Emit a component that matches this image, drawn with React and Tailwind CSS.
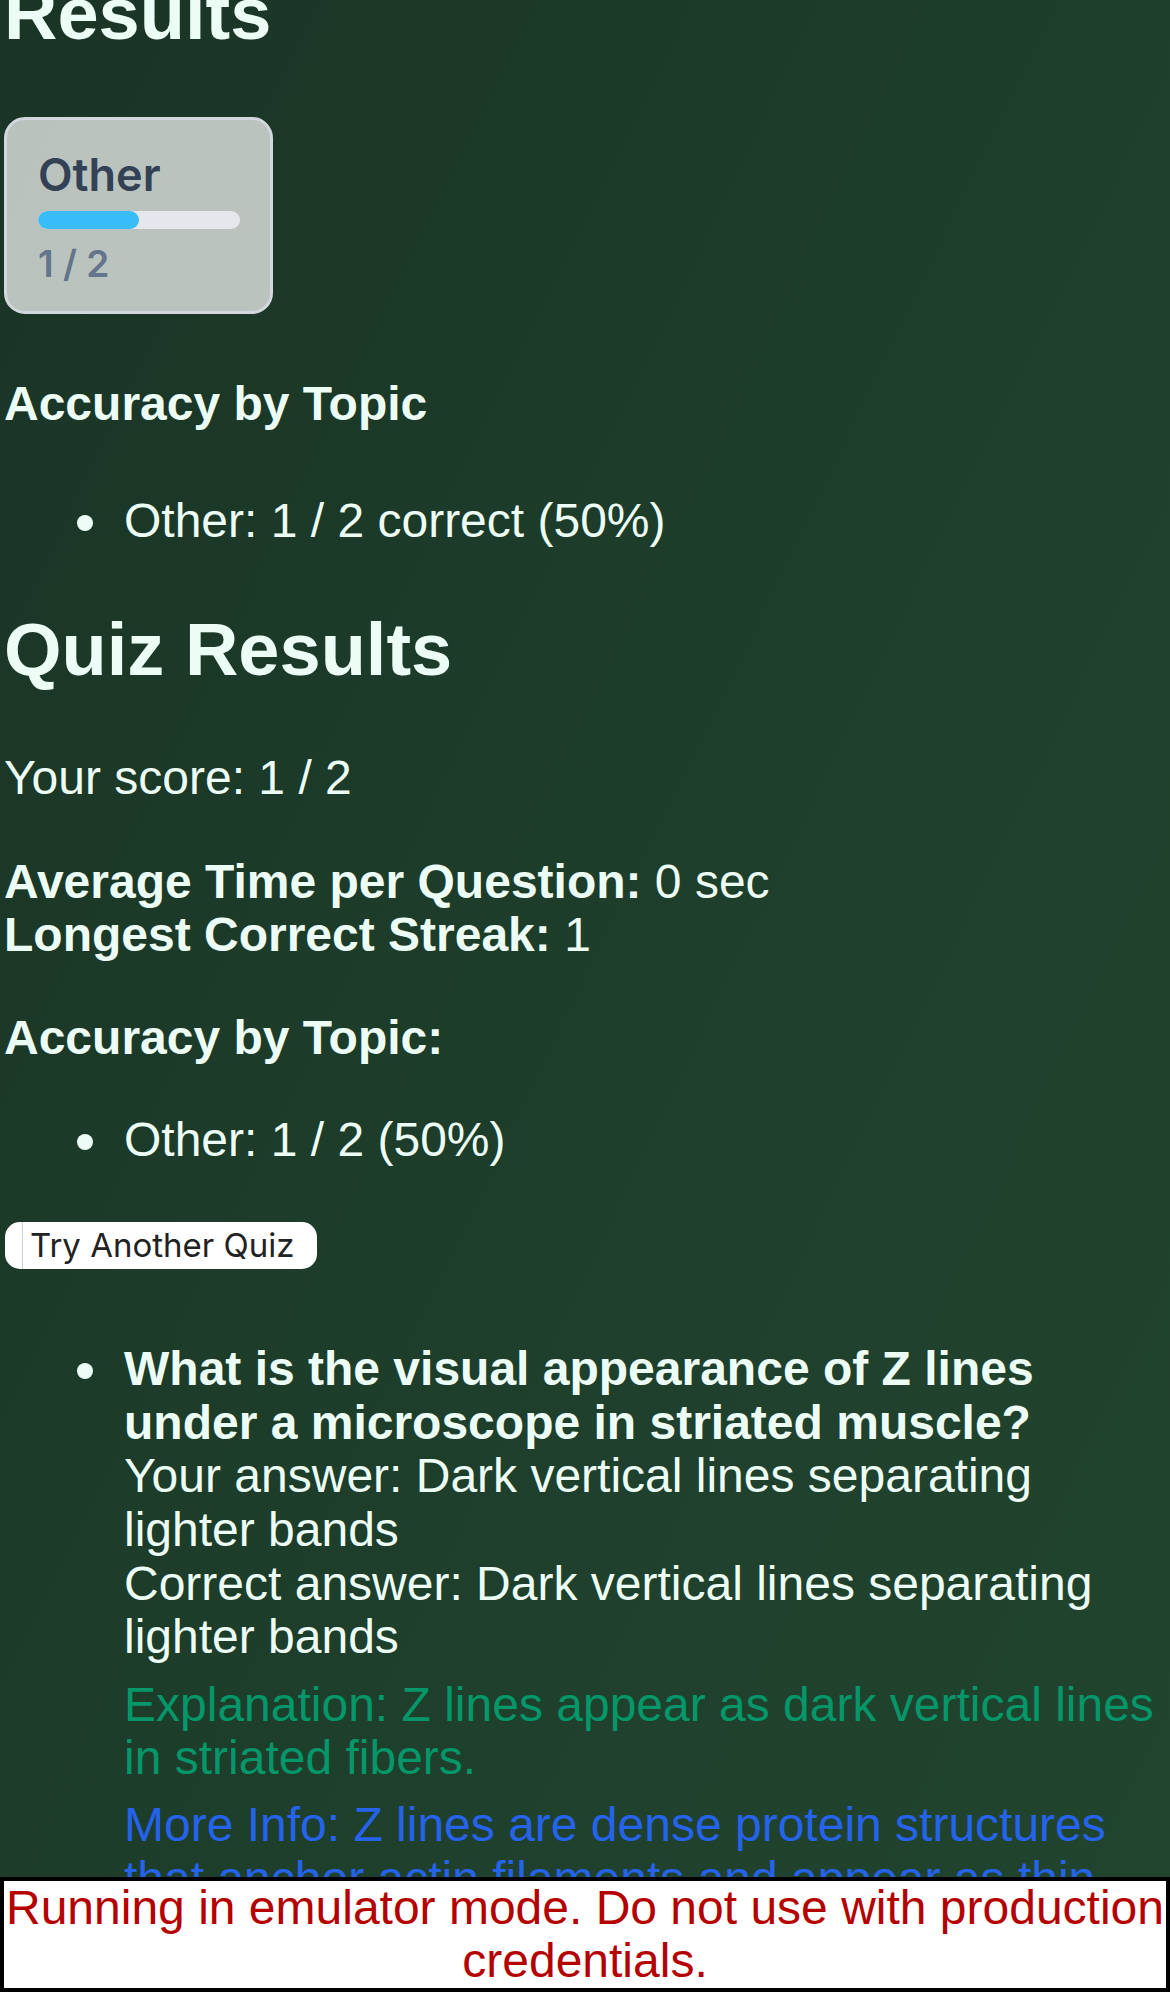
import React from "react";

function Bullet() {
  return <span className="absolute left-[-47px] top-[21px] h-[16px] w-[16px] rounded-full bg-[#ecfdf5]" />;
}

export default function App() {
  return (
    <div className="min-h-[1992px] bg-gradient-to-br from-[#1a3425] via-[#1e3f2c] to-[#22462f] text-[#ecfdf5] font-['Liberation_Sans',Arial,sans-serif] text-[48px] leading-[53.6px] px-[4px] pb-[400px] overflow-hidden">
      <h2 className="mt-[-28px] text-[74px] leading-[83px] font-bold">Results</h2>

      <div className="mt-[62px] w-[269px] h-[197px] rounded-[21px] border-[3px] border-[#d3d6dd] bg-white/70 pt-[28px] pl-[31px] pr-[30px] font-['Inter',sans-serif]">
        <div className="text-[45px] leading-[54px] font-semibold text-[#334155]">Other</div>
        <div className="mt-[9px] h-[18px] w-full rounded-full bg-[#e5e7eb] overflow-hidden">
          <div className="h-full rounded-full bg-[#38bdf8]" style={{ width: "50%" }} />
        </div>
        <div className="mt-[12px] text-[37px] leading-[46px] font-semibold text-[#64748b]">1 / 2</div>
      </div>

      <h4 className="mt-[63px] font-bold">Accuracy by Topic</h4>
      <ul className="mt-[63px] list-none pl-[120px]">
        <li className="relative"><Bullet />Other: 1 / 2 correct (50%)</li>
      </ul>

      <h2 className="mt-[61px] text-[74px] leading-[83px] font-bold">Quiz Results</h2>
      <p className="mt-[60px]">Your score: 1 / 2</p>
      <p className="mt-[50px]">
        <strong className="font-bold">Average Time per Question:</strong> 0 sec
        <br />
        <strong className="font-bold">Longest Correct Streak:</strong> 1
      </p>
      <p className="mt-[49px] font-bold">Accuracy by Topic:</p>
      <ul className="mt-[48px] list-none pl-[120px]">
        <li className="relative"><Bullet />Other: 1 / 2 (50%)</li>
      </ul>

      <button className="mt-[56px] ml-[1px] flex h-[47px] w-[312px] items-stretch rounded-[15px] bg-white text-[#222222] font-['Inter',sans-serif] text-[33px] leading-[47px] overflow-hidden">
        <span className="w-[17px]" />
        <span className="w-px bg-[#cfd2d4]" />
        <span className="pl-[7px] whitespace-nowrap">Try Another Quiz</span>
      </button>

      <ul className="mt-[73px] list-none pl-[120px]">
        <li className="relative">
          <Bullet />
          <strong className="font-bold">What is the visual appearance of Z lines under a microscope in striated muscle?</strong>
          <br />
          Your answer: Dark vertical lines separating lighter bands
          <br />
          Correct answer: Dark vertical lines separating lighter bands
          <p className="mt-[14px] text-[#059669]">Explanation: Z lines appear as dark vertical lines in striated fibers.</p>
          <p className="mt-[13px] text-[#2563eb]">More Info: Z lines are dense protein structures that anchor actin filaments and appear as thin dark lines marking the boundaries of each sarcomere.</p>
        </li>
      </ul>

      <p className="fixed bottom-0 left-0 m-0 w-full border-[4px] border-black bg-white text-center text-[#b50000] text-[48px] leading-[53.6px] font-['Liberation_Sans',Arial,sans-serif] z-50">
        Running in emulator mode. Do not use with production credentials.
      </p>
    </div>
  );
}
